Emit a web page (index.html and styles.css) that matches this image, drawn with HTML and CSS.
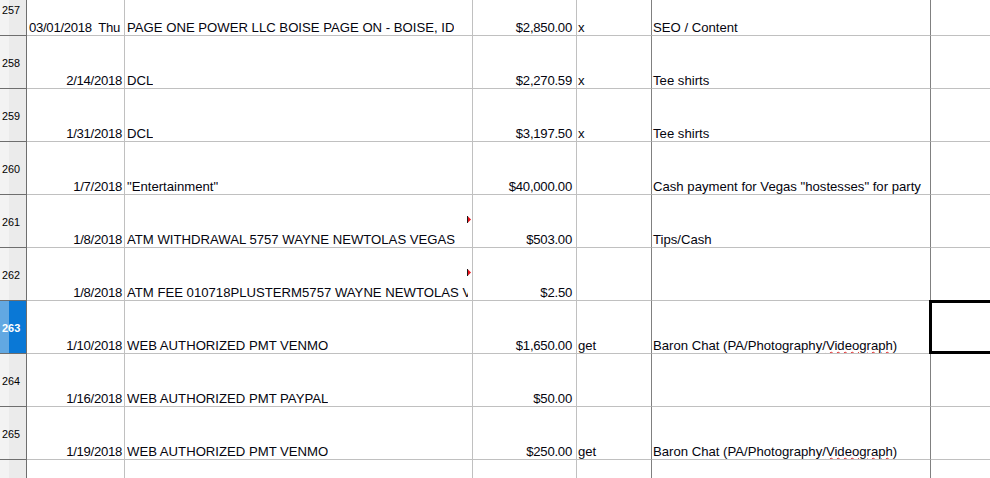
FILE: index.html
```html
<!DOCTYPE html>
<html>
<head>
<meta charset="utf-8">
<link rel="stylesheet" href="styles.css">
</head>
<body>
<div class="sheet">
  <div class="rh">257</div>
  <div class="c a left">03/01/2018  Thu</div>
  <div class="c b"><span class="t">PAGE ONE POWER LLC BOISE PAGE ON - BOISE, ID</span></div>
  <div class="c amt">$2,850.00</div>
  <div class="c d">x</div>
  <div class="c e">SEO / Content</div>
  <div class="c f"></div>

  <div class="rh">258</div>
  <div class="c a">2/14/2018</div>
  <div class="c b"><span class="t">DCL</span></div>
  <div class="c amt">$2,270.59</div>
  <div class="c d">x</div>
  <div class="c e">Tee shirts</div>
  <div class="c f"></div>

  <div class="rh">259</div>
  <div class="c a">1/31/2018</div>
  <div class="c b"><span class="t">DCL</span></div>
  <div class="c amt">$3,197.50</div>
  <div class="c d">x</div>
  <div class="c e">Tee shirts</div>
  <div class="c f"></div>

  <div class="rh">260</div>
  <div class="c a">1/7/2018</div>
  <div class="c b"><span class="t">"Entertainment"</span></div>
  <div class="c amt">$40,000.00</div>
  <div class="c d"></div>
  <div class="c e">Cash payment for Vegas "hostesses" for party</div>
  <div class="c f"></div>

  <div class="rh">261</div>
  <div class="c a">1/8/2018</div>
  <div class="c b"><span class="t">ATM WITHDRAWAL 5757 WAYNE NEWTOLAS VEGAS</span><svg class="ov" width="4" height="7" viewBox="0 0 4 7"><path d="M1 0.5 L4 3.5 L1 6.5 Z" fill="#e8101a"/><rect x="0" y="0" width="1" height="7" fill="#1a1a1a"/></svg></div>
  <div class="c amt">$503.00</div>
  <div class="c d"></div>
  <div class="c e">Tips/Cash</div>
  <div class="c f"></div>

  <div class="rh">262</div>
  <div class="c a">1/8/2018</div>
  <div class="c b"><span class="t">ATM FEE 010718PLUSTERM5757 WAYNE NEWTOLAS VEGAS NV</span><svg class="ov" width="4" height="7" viewBox="0 0 4 7"><path d="M1 0.5 L4 3.5 L1 6.5 Z" fill="#e8101a"/><rect x="0" y="0" width="1" height="7" fill="#1a1a1a"/></svg></div>
  <div class="c amt">$2.50</div>
  <div class="c d"></div>
  <div class="c e"></div>
  <div class="c f"></div>

  <div class="rh sel">263</div>
  <div class="c a">1/10/2018</div>
  <div class="c b"><span class="t">WEB AUTHORIZED PMT VENMO</span></div>
  <div class="c amt">$1,650.00</div>
  <div class="c d">get</div>
  <div class="c e">Baron Chat (PA/Photography/<span class="sp">Videograph</span>)</div>
  <div class="c f cur"></div>

  <div class="rh">264</div>
  <div class="c a">1/16/2018</div>
  <div class="c b"><span class="t">WEB AUTHORIZED PMT PAYPAL</span></div>
  <div class="c amt">$50.00</div>
  <div class="c d"></div>
  <div class="c e"></div>
  <div class="c f"></div>

  <div class="rh">265</div>
  <div class="c a">1/19/2018</div>
  <div class="c b"><span class="t">WEB AUTHORIZED PMT VENMO</span></div>
  <div class="c amt">$250.00</div>
  <div class="c d">get</div>
  <div class="c e">Baron Chat (PA/Photography/<span class="sp">Videograph</span>)</div>
  <div class="c f"></div>

  <div class="rh"></div>
  <div class="c a"></div>
  <div class="c b"></div>
  <div class="c amt"></div>
  <div class="c d"></div>
  <div class="c e"></div>
  <div class="c f"></div>
</div>
</body>
</html>
```

FILE: styles.css
```css
html, body {
  margin: 0;
  padding: 0;
  background: #ffffff;
  overflow: hidden;
  width: 990px;
  height: 478px;
}

.sheet {
  display: grid;
  grid-template-columns: 27px 98px 348px 104px 75px 279px 80px;
  grid-auto-rows: 53px;
  margin-top: -17px;
  font-family: "Liberation Sans", Arial, sans-serif;
  font-size: 13.15px;
  line-height: 15px;
  color: #05050f;
}

.rh {
  box-sizing: border-box;
  background: linear-gradient(to right, #f3f3f3 0, #f3f3f3 9px, #ebebeb 9px, #ebebeb 100%);
  border-right: 1px solid #6e6e6e;
  border-bottom: 1px solid #6e6e6e;
  display: flex;
  align-items: center;
  padding-left: 2px;
  padding-top: 3px;
  font-size: 10.8px;
  color: #000000;
}

.rh.sel {
  background: linear-gradient(to right, #62a8e2 0, #62a8e2 9px, #0a78d6 9px, #0a78d6 100%);
  color: #ffffff;
  font-weight: bold;
  font-size: 11px;
}

.c {
  box-sizing: border-box;
  border-right: 1px solid #c0c0c0;
  border-bottom: 1px solid #c0c0c0;
  display: flex;
  align-items: flex-end;
  padding: 0 2px 0 2px;
  white-space: pre;
  overflow: hidden;
  position: relative;
}

.a {
  justify-content: flex-end;
  letter-spacing: -0.3px;
}

.a.left {
  justify-content: flex-start;
}

.b {
  padding-right: 4px;
}

.b .t {
  overflow: hidden;
  min-width: 0;
}

.amt {
  justify-content: flex-end;
  padding-right: 4px;
  letter-spacing: -0.25px;
}

.d {
  padding-left: 1px;
  border-right-color: #808080;
}

.e {
  padding-left: 1px;
  border-right-color: #808080;
}

.f {
  border-right: none;
  overflow: visible;
}

.ov {
  position: absolute;
  right: 1px;
  top: 21px;
}

.sp {
  text-decoration: underline wavy #e02020;
  text-decoration-thickness: 1px;
  text-underline-offset: 1px;
}

.cur::after {
  content: "";
  position: absolute;
  top: -1px;
  left: -2px;
  right: -10px;
  bottom: -1px;
  border: 3px solid #000000;
}
```
